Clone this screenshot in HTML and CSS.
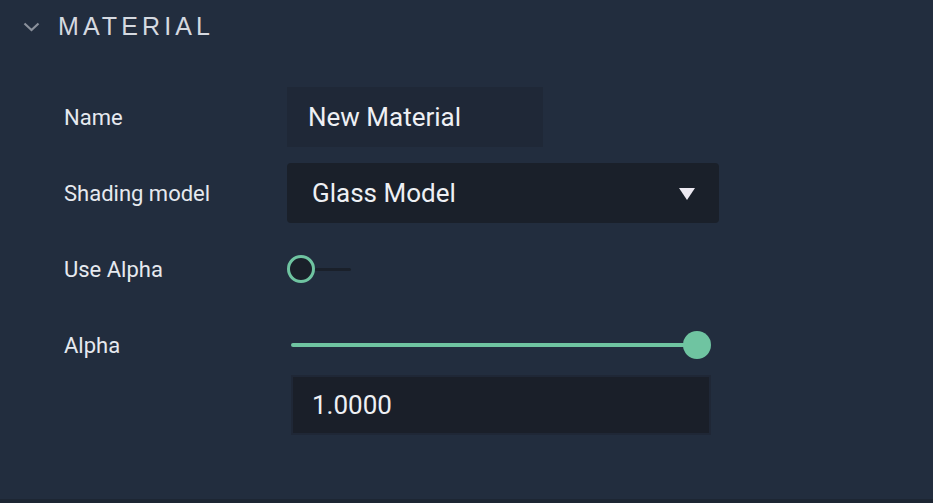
FILE: index.html
```html
<!DOCTYPE html>
<html>
<head>
<meta charset="utf-8">
<link rel="stylesheet" href="styles.css">
</head>
<body>
<div class="panel">
  <div class="header">
    <svg class="chev" width="17" height="10" viewBox="0 0 17 10"><path d="M1.5 1.5 L8.5 8 L15.5 1.5" fill="none" stroke="#8a909b" stroke-width="2.2"/></svg>
    <span class="title">MATERIAL</span>
  </div>
  <div class="form">
    <div class="label">Name</div>
    <div class="ctl"><div class="text-input">New Material</div></div>

    <div class="label">Shading model</div>
    <div class="ctl"><div class="select"><span>Glass Model</span><svg width="16" height="12" viewBox="0 0 16 12"><path d="M0 0 H16 L8 12 Z" fill="#ece9f1"/></svg></div></div>

    <div class="label">Use Alpha</div>
    <div class="ctl"><div class="toggle"><span class="knob"></span><span class="track"></span></div></div>

    <div class="label">Alpha</div>
    <div class="ctl"><div class="slider"><span class="fill"></span><span class="thumb"></span></div></div>

    <div class="label"></div>
    <div class="ctl last"><div class="num-input">1.0000</div></div>
  </div>
</div>
</body>
</html>
```

FILE: styles.css
```css
html, body {
  margin: 0;
  padding: 0;
}
body {
  background: #1d2633;
  width: 933px;
  height: 503px;
  overflow: hidden;
}
.panel {
  background: #222d3e;
  height: 499px;
  box-sizing: border-box;
}
.header {
  display: flex;
  align-items: center;
  height: 52px;
  padding-left: 23px;
}
.chev {
  margin-top: 2px;
}
.title {
  margin-left: 18px;
  font-family: "Liberation Sans", Arial, sans-serif;
  font-size: 25px;
  letter-spacing: 4.1px;
  color: #d5d9e0;
}
.form {
  display: grid;
  grid-template-columns: 223px 1fr;
  grid-template-rows: 60px 60px 60px 60px 60px;
  row-gap: 16px;
  padding-left: 64px;
  padding-top: 35px;
}
.label {
  font-family: Roboto, sans-serif;
  font-size: 22px;
  color: #e6e9ef;
  display: flex;
  align-items: center;
}
.ctl {
  display: flex;
  align-items: center;
}
.ctl.last {
  align-self: start;
  margin-top: -16px;
}
.text-input {
  width: 256px;
  height: 60px;
  background: #1f2837;
  box-sizing: border-box;
  padding-left: 21px;
  display: flex;
  align-items: center;
  font-family: Roboto, sans-serif;
  font-size: 26px;
  color: #eef0f4;
}
.select {
  width: 432px;
  height: 60px;
  background: #1a202a;
  border-radius: 4px;
  box-sizing: border-box;
  padding-left: 25px;
  padding-right: 24px;
  display: flex;
  align-items: center;
  justify-content: space-between;
  font-family: Roboto, sans-serif;
  font-size: 26px;
  color: #eef0f4;
}
.select svg {
  margin-top: 1px;
}
.toggle {
  display: flex;
  align-items: center;
}
.knob {
  width: 28px;
  height: 28px;
  box-sizing: border-box;
  border: 3.5px solid #6fc4a1;
  border-radius: 50%;
  background: #1a202a;
}
.track {
  width: 36px;
  height: 3px;
  background: #1a202a;
  border-radius: 2px;
}
.slider {
  position: relative;
  margin-left: 4px;
  width: 424px;
  height: 28px;
  display: flex;
  align-items: center;
}
.fill {
  width: 406px;
  height: 4px;
  border-radius: 2px;
  background: #6fc4a1;
}
.thumb {
  position: absolute;
  left: 392px;
  top: 0;
  width: 28px;
  height: 28px;
  border-radius: 50%;
  background: #6fc4a1;
}
.num-input {
  margin-left: 4px;
  width: 420px;
  height: 60px;
  box-sizing: border-box;
  border: 2px solid #1f2736;
  background: #1a1f29;
  padding-left: 19px;
  display: flex;
  align-items: center;
  font-family: Roboto, sans-serif;
  font-size: 26px;
  color: #eef0f4;
}
```
